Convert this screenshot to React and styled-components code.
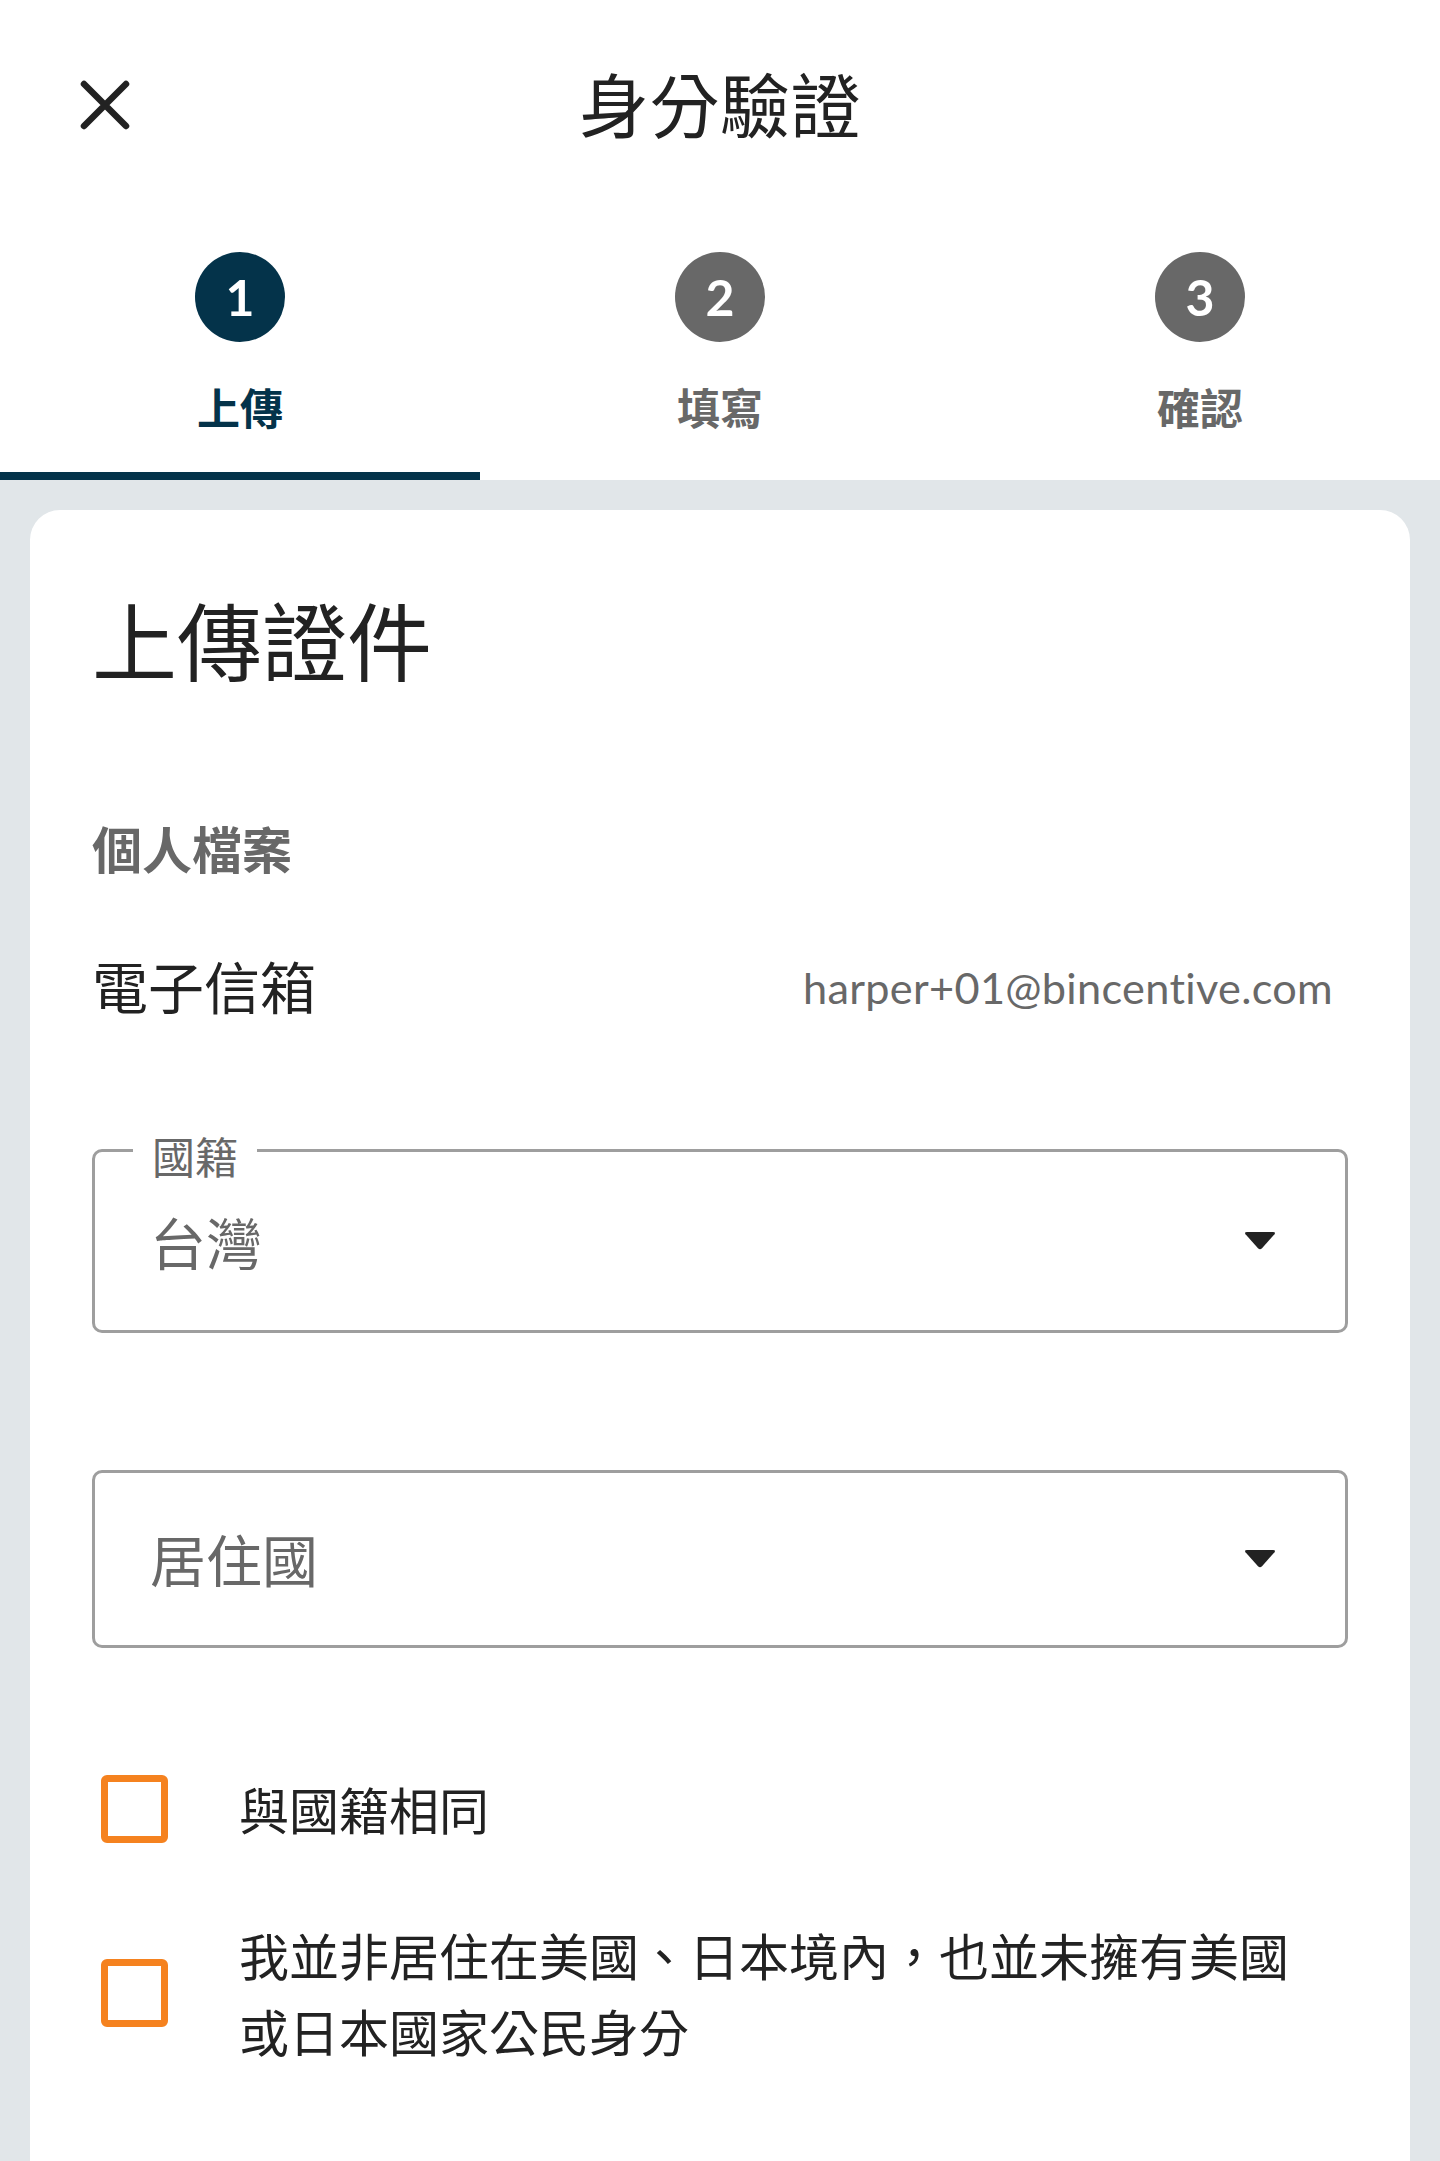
import React from "react";
import styled, { createGlobalStyle } from "styled-components";

const Global = createGlobalStyle`
  html, body { margin: 0; padding: 0; background: #ffffff; }
  body { font-family: Lato, "Noto Sans CJK TC", sans-serif; color: #222; }
  * { box-sizing: border-box; }
`;

const CJK = `Lato, "Noto Sans CJK TC", sans-serif`;

const Page = styled.div`
  width: 1440px;
  min-height: 2161px;
  background: #e1e6e9;
  display: flex;
  flex-direction: column;
`;

const Top = styled.div`
  background: #ffffff;
`;

const Header = styled.header`
  height: 212px;
  display: grid;
  grid-template-columns: 1fr auto 1fr;
  align-items: center;
`;

const CloseButton = styled.button`
  justify-self: start;
  margin-left: 80px;
  margin-top: -2px;
  width: 50px;
  height: 50px;
  padding: 0;
  border: 0;
  background: none;
  display: flex;
  cursor: pointer;
`;

const Title = styled.h1`
  margin: 0;
  font-family: ${CJK};
  font-weight: 400;
  font-size: 70px;
  line-height: 1;
  color: #222;
  letter-spacing: 0.5px;
`;

const Steps = styled.nav`
  display: grid;
  grid-template-columns: repeat(3, 1fr);
`;

const Step = styled.div`
  display: flex;
  flex-direction: column;
  align-items: center;
  padding-top: 40px;
  padding-bottom: 42px;
  gap: 45px;
  border-bottom: 8px solid ${(p) => (p.$active ? "#04334a" : "transparent")};
`;

const StepCircle = styled.div`
  width: 90px;
  height: 90px;
  border-radius: 50%;
  background: ${(p) => (p.$active ? "#04334a" : "#686868")};
  color: #fff;
  display: flex;
  align-items: center;
  justify-content: center;
  font-family: Lato, sans-serif;
  font-weight: 700;
  font-size: 50px;
  line-height: 1;
`;

const StepLabel = styled.div`
  font-family: ${CJK};
  font-weight: 700;
  font-size: 43px;
  line-height: 1;
  color: ${(p) => (p.$active ? "#04334a" : "#686868")};
`;

const Main = styled.main`
  flex: 1;
  padding: 30px 30px 0;
  display: flex;
`;

const Card = styled.section`
  flex: 1;
  background: #fff;
  border-radius: 30px 30px 0 0;
  padding: 90px 62px 60px;
  display: flex;
  flex-direction: column;
`;

const CardTitle = styled.h2`
  margin: 0;
  font-family: ${CJK};
  font-weight: 400;
  font-size: 85px;
  line-height: 1;
  color: #222;
`;

const SectionLabel = styled.h3`
  margin: 140px 0 0;
  font-family: ${CJK};
  font-weight: 700;
  font-size: 50px;
  line-height: 1;
  color: #686868;
`;

const InfoRow = styled.div`
  margin-top: 85px;
  display: flex;
  align-items: center;
  justify-content: space-between;
`;

const InfoKey = styled.div`
  font-family: ${CJK};
  font-size: 56px;
  line-height: 1;
  color: #222;
`;

const InfoValue = styled.div`
  font-family: Lato, sans-serif;
  font-size: 43.3px;
  line-height: 1;
  color: #686868;
  margin-right: 15px;
  letter-spacing: 0.3px;
`;

const SelectBox = styled.div`
  position: relative;
  margin-top: ${(p) => p.$mt}px;
  height: ${(p) => p.$h}px;
  border: 3px solid #9e9e9e;
  border-radius: 10px;
  display: flex;
  align-items: center;
  justify-content: space-between;
  padding: 0 69px 0 55px;
`;

const Legend = styled.span`
  position: absolute;
  top: -16px;
  left: 38px;
  padding: 0 19px;
  background: #fff;
  font-family: ${CJK};
  font-size: 43px;
  line-height: 1;
  color: #686868;
`;

const SelectValue = styled.span`
  font-family: ${CJK};
  font-size: 56px;
  line-height: 1;
  color: #686868;
  margin-top: ${(p) => p.$dy || 0}px;
`;

const CheckList = styled.div`
  margin-top: 125px;
  display: flex;
  flex-direction: column;
  gap: 70px;
`;

const CheckRow = styled.label`
  display: flex;
  align-items: center;
  padding-left: 9px;
  gap: 71px;
`;

const Box = styled.span`
  flex: none;
  width: 67px;
  height: 68px;
  border: 7px solid #f5821f;
  border-radius: 6px;
  margin-top: -4px;
`;

const CheckText = styled.span`
  font-family: ${CJK};
  font-size: 50px;
  line-height: 76px;
  color: #222;
  max-width: 1080px;
`;

const Caret = () => (
  <svg width="32" height="18" viewBox="0 0 32 18" aria-hidden="true">
    <path
      d="M3 0 L29 0 Q32 0 30.5 2.2 L18 16.2 Q16 18.2 14 16.2 L1.5 2.2 Q0 0 3 0 Z"
      fill="#222"
    />
  </svg>
);

const CloseIcon = () => (
  <svg width="50" height="50" viewBox="0 0 50 50" aria-hidden="true">
    <path
      d="M4 4 L46 46 M46 4 L4 46"
      stroke="#222"
      strokeWidth="6.5"
      strokeLinecap="round"
      fill="none"
    />
  </svg>
);

const steps = [
  { n: "1", label: "上傳", active: true },
  { n: "2", label: "填寫" },
  { n: "3", label: "確認" },
];

export default function App() {
  return (
    <>
      <Global />
      <Page>
        <Top>
          <Header>
            <CloseButton aria-label="close">
              <CloseIcon />
            </CloseButton>
            <Title>身分驗證</Title>
            <div />
          </Header>
          <Steps>
            {steps.map((s) => (
              <Step key={s.n} $active={s.active}>
                <StepCircle $active={s.active}>{s.n}</StepCircle>
                <StepLabel $active={s.active}>{s.label}</StepLabel>
              </Step>
            ))}
          </Steps>
        </Top>
        <Main>
          <Card>
            <CardTitle>上傳證件</CardTitle>
            <SectionLabel>個人檔案</SectionLabel>
            <InfoRow>
              <InfoKey>電子信箱</InfoKey>
              <InfoValue>harper+01@bincentive.com</InfoValue>
            </InfoRow>
            <SelectBox $mt={133} $h={184}>
              <Legend>國籍</Legend>
              <SelectValue $dy={5}>台灣</SelectValue>
              <Caret />
            </SelectBox>
            <SelectBox $mt={137} $h={178}>
              <SelectValue $dy={3}>居住國</SelectValue>
              <Caret />
            </SelectBox>
            <CheckList>
              <CheckRow>
                <Box />
                <CheckText>與國籍相同</CheckText>
              </CheckRow>
              <CheckRow>
                <Box />
                <CheckText>
                  我並非居住在美國、日本境內，也並未擁有美國或日本國家公民身分
                </CheckText>
              </CheckRow>
            </CheckList>
          </Card>
        </Main>
      </Page>
    </>
  );
}
